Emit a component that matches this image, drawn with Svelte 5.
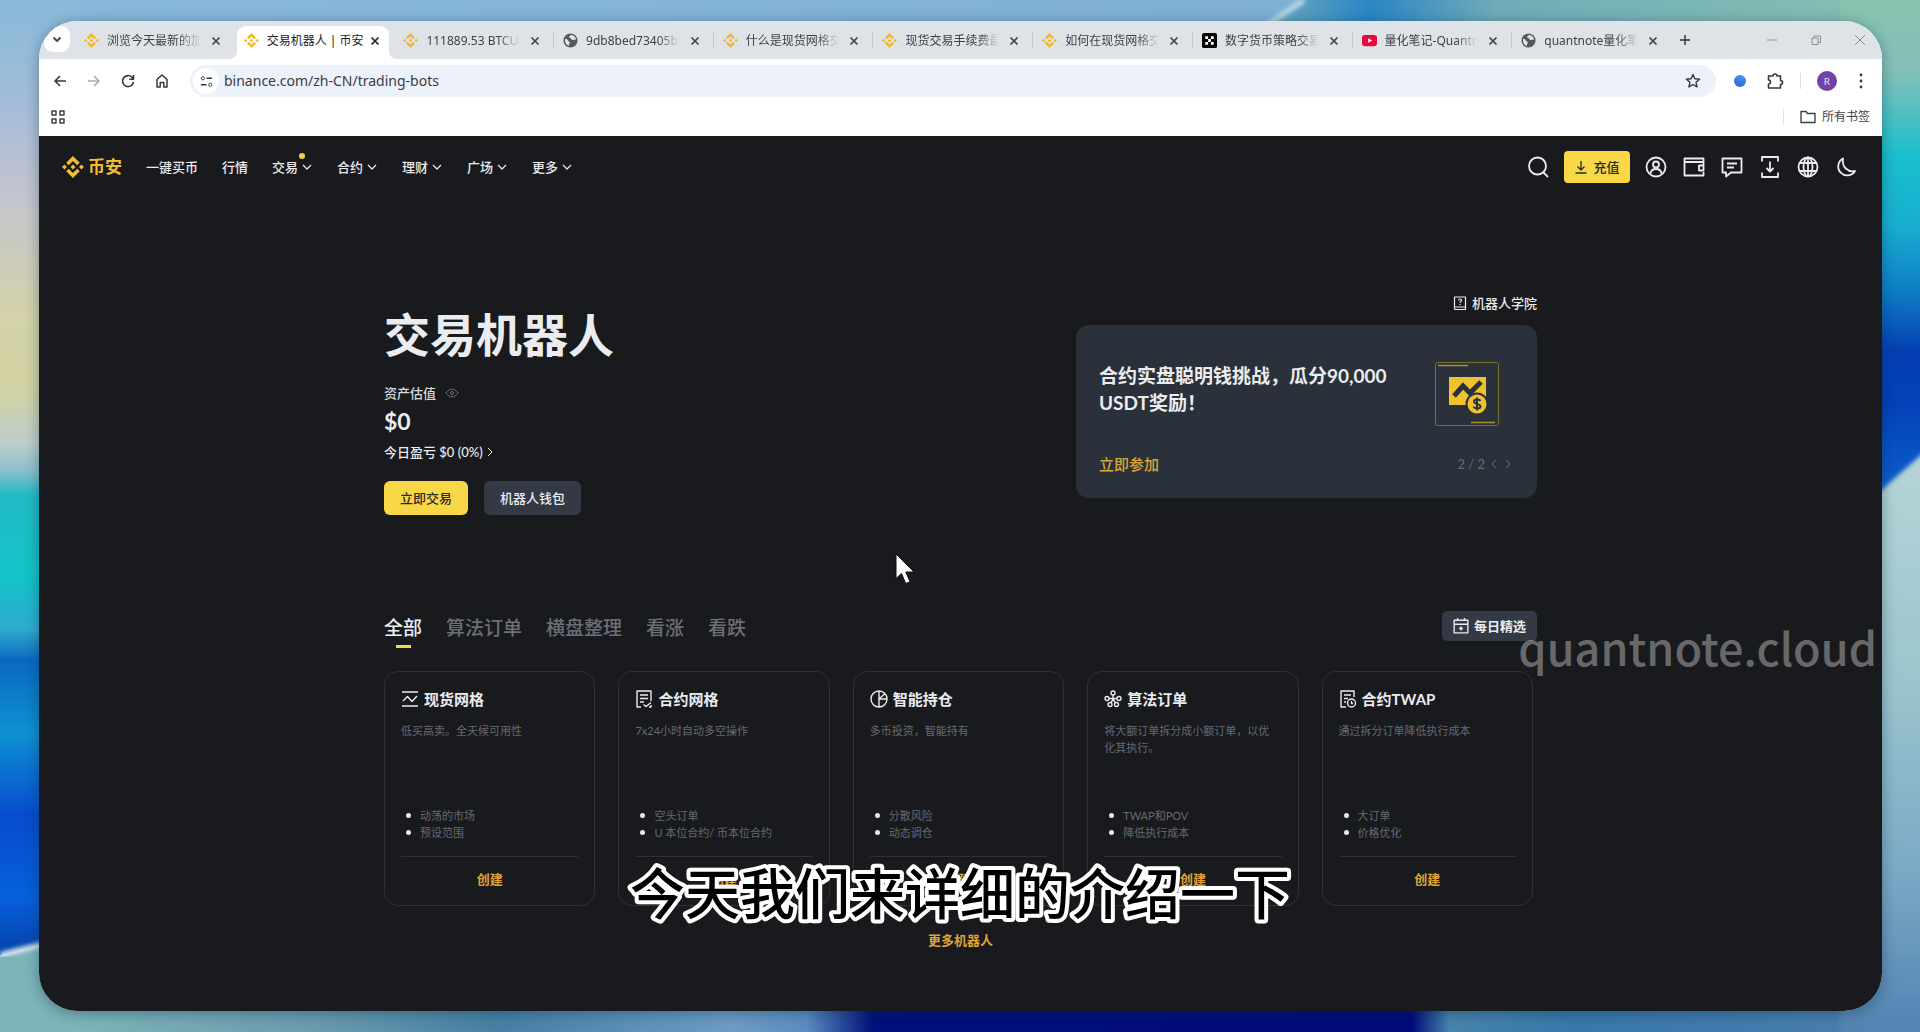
<script>
  const tabs = [
    { title: '浏览今天最新的加密货币', icon: 'bnb' },
    { title: '交易机器人 | 币安', icon: 'bnb', active: true },
    { title: '111889.53 BTCUSDT', icon: 'bnb' },
    { title: '9db8bed73405b2', icon: 'globe' },
    { title: '什么是现货网格交易', icon: 'bnb' },
    { title: '现货交易手续费最新', icon: 'bnb' },
    { title: '如何在现货网格交易', icon: 'bnb' },
    { title: '数字货币策略交易所', icon: 'okx' },
    { title: '量化笔记-Quantnote', icon: 'tube' },
    { title: 'quantnote量化笔记', icon: 'globe' }
  ];

  const nav = [
    { label: '一键买币' },
    { label: '行情' },
    { label: '交易', menu: true, dot: true },
    { label: '合约', menu: true },
    { label: '理财', menu: true },
    { label: '广场', menu: true },
    { label: '更多', menu: true }
  ];

  const tools = [
    { name: '账户', icon: 'user' },
    { name: '钱包', icon: 'wallet' },
    { name: '消息', icon: 'chat' },
    { name: '下载', icon: 'download' },
    { name: '语言', icon: 'world' },
    { name: '主题', icon: 'moon' }
  ];

  const filters = ['全部', '算法订单', '横盘整理', '看涨', '看跌'];

  const bots = [
    { icon: 'spot', title: '现货网格', text: '低买高卖。全天候可用性', points: ['动荡的市场', '预设范围'] },
    { icon: 'futures', title: '合约网格', text: '7x24小时自动多空操作', points: ['空头订单', 'U 本位合约/ 币本位合约'] },
    { icon: 'pie', title: '智能持仓', text: '多币投资，智能持有', points: ['分散风险', '动态调仓'] },
    { icon: 'algo', title: '算法订单', text: '将大额订单拆分成小额订单，以优化其执行。', points: ['TWAP和POV', '降低执行成本'] },
    { icon: 'twap', title: '合约TWAP', text: '通过拆分订单降低执行成本', points: ['大订单', '价格优化'] }
  ];
</script>

{#snippet bnb()}
  <svg viewBox="0 0 127 127" fill="currentColor" aria-hidden="true">
    <path d="M38.7 53.2 63.3 28.6l24.6 24.6 14.3-14.3L63.3 0 24.4 38.9zM0 63.3 14.3 49l14.3 14.3-14.3 14.3zM38.7 73.4 63.3 98l24.6-24.6 14.3 14.3-38.9 38.9-38.9-38.9zM98 63.3 112.3 49l14.3 14.3-14.3 14.3zM77.8 63.3 63.3 48.8 48.8 63.3l14.5 14.5z" />
  </svg>
{/snippet}

{#snippet favicon(kind)}
  {#if kind === 'bnb'}
    {@render bnb()}
  {:else if kind === 'globe'}
    <svg viewBox="0 0 16 16" aria-hidden="true">
      <circle cx="8" cy="8" r="7.5" fill="#55585d" />
      <path d="M2.2 6.2c1.8.1 2.9.9 3.3 2 .3.9 1.6.7 1.7 1.8.1 1.3-1 1.3-.8 3.7C3.6 13 1.7 10 2.2 6.200zM8.200 2.100c-.4 1.300-1.800 1.100-1.700 2.300.1 1.200 2.300.6 2.500 2 .2 1.500 1.800 1.100 2.600.7 1-.5 1.800 0 2.300.4-.1-2.900-2.200-5.500-5.700-5.400z" fill="#e2e4e9" />
    </svg>
  {:else if kind === 'okx'}
    <svg viewBox="0 0 16 16" aria-hidden="true">
      <rect width="16" height="16" rx="2" fill="#050505" />
      <path d="M3.500 3.500h3v3h-3zM9.500 3.500h3v3h-3zM6.500 6.500h3v3h-3zM3.500 9.500h3v3h-3zM9.500 9.500h3v3h-3z" fill="#fff" />
    </svg>
  {:else}
    <svg viewBox="0 0 16 16" aria-hidden="true">
      <rect y="2" width="16" height="12" rx="3" fill="#e5093f" />
      <path d="m6.500 5.500 4.500 2.500-4.500 2.500z" fill="#fff" />
    </svg>
  {/if}
{/snippet}

{#snippet cross()}
  <svg viewBox="0 0 10 10" class="line" aria-hidden="true"><path d="m1.500 1.500 7 7m0-7-7 7" stroke-width="1.700" /></svg>
{/snippet}

{#snippet tool(kind)}
  <svg viewBox="0 0 24 24" class="line" aria-hidden="true">
    {#if kind === 'user'}
      <circle cx="12" cy="12" r="9.500" /><circle cx="12" cy="9.500" r="3" />
      <path d="M6.500 18.500c.5-3.200 2.700-4.500 5.500-4.500s5 1.300 5.500 4.500" />
    {:else if kind === 'wallet'}
      <path d="M21.500 7V3.500h-19v17h19V17M2.500 7h19v3.500M21.500 10.500H17v5h4.500z" />
    {:else if kind === 'chat'}
      <path d="M2.500 3.500h19v14H11L6 21.500v-4H2.500zM7 8.500h10M7 12.500h7" />
    {:else if kind === 'download'}
      <path d="M4 6.500V2h16v4.500M4 17.500V22h16v-4.500M12 6.500v10M8.500 13l3.500 3.500 3.500-3.500" />
    {:else if kind === 'world'}
      <circle cx="12" cy="12" r="9.500" /><ellipse cx="12" cy="12" rx="4.500" ry="9.500" />
      <path d="M3.500 8h17M3.500 16h17M12 2.500v19" />
    {:else}
      <path d="M9 3.500a9 9 0 1 0 12 12.500C14 17.500 7.500 12 9 3.500z" />
    {/if}
  </svg>
{/snippet}

{#snippet botIcon(kind)}
  <svg viewBox="0 0 18 18" class="line" aria-hidden="true">
    {#if kind === 'spot'}
      <path d="M1 2h16M1 16h16M2 11l4.500-4.500 4.500 5L16 6" />
    {:else if kind === 'futures'}
      <path d="M16 11V1H2v16h4M5 5h8M5 8.500h8M5 12h4M8.500 14.500l2.500 2 5-4M14 17h2v-2" />
    {:else if kind === 'pie'}
      <circle cx="9" cy="9" r="8" /><path d="M9 1v16M9 9l6-5.500M9 9h8" />
    {:else if kind === 'algo'}
      <circle cx="9" cy="3" r="2" /><circle cx="3" cy="8.500" r="2" /><circle cx="15" cy="8.500" r="2" />
      <circle cx="6" cy="14.500" r="2" /><circle cx="12.500" cy="14.500" r="2" />
      <path d="M9 5v4M5 8.500h8M7 12.800 9 9l2.500 3.800" />
    {:else}
      <path d="M15 7V1H2v16h5M5 5h7M5 8.500h4M5 12h2" /><circle cx="12.500" cy="13" r="4" /><path d="M12.500 11v2.500H14" />
    {/if}
  </svg>
{/snippet}

<div class="desktop">
  <svg class="wallpaper" viewBox="0 0 1920 1032" preserveAspectRatio="none" aria-hidden="true">
    <defs>
      <linearGradient id="wl" x1="0" y1="0" x2="0" y2="1">
        <stop offset="0" stop-color="#88b9da" /><stop offset=".1" stop-color="#a4bcd8" />
        <stop offset=".2" stop-color="#c6c6cc" /><stop offset=".31" stop-color="#d3d2a8" />
        <stop offset=".38" stop-color="#d2d2a4" /><stop offset=".43" stop-color="#bccdcb" />
        <stop offset=".455" stop-color="#8fc0cb" /><stop offset=".48" stop-color="#22bac6" />
        <stop offset=".56" stop-color="#12c4c8" /><stop offset=".61" stop-color="#30aace" />
        <stop offset=".64" stop-color="#0a68c0" /><stop offset=".71" stop-color="#0e92d2" />
        <stop offset=".79" stop-color="#064cce" /><stop offset=".87" stop-color="#0660dc" />
        <stop offset=".93" stop-color="#0640a4" />
      </linearGradient>
      <linearGradient id="wr" x1="0" y1="0" x2="0" y2="1">
        <stop offset="0" stop-color="#86c4b0" /><stop offset=".07" stop-color="#84bfba" />
        <stop offset=".1" stop-color="#5cc0c0" /><stop offset=".15" stop-color="#1abfcc" />
        <stop offset=".22" stop-color="#18add0" /><stop offset=".28" stop-color="#107fc6" />
        <stop offset=".34" stop-color="#0440b2" /><stop offset=".39" stop-color="#0440b8" />
        <stop offset=".48" stop-color="#0c62cc" />
      </linearGradient>
      <linearGradient id="wr2" x1="0" y1="0" x2="0" y2="1">
        <stop offset="0" stop-color="#b8d4d8" /><stop offset=".4" stop-color="#9ac4cc" />
        <stop offset=".7" stop-color="#7caac6" /><stop offset="1" stop-color="#4c7fb0" />
      </linearGradient>
      <linearGradient id="wt"><stop offset="0" stop-color="#88b9da" /><stop offset="1" stop-color="#7aacd0" /></linearGradient>
      <linearGradient id="wt2">
        <stop offset="0" stop-color="#7cb0b4" /><stop offset=".12" stop-color="#5a9fc0" />
        <stop offset=".22" stop-color="#2a86c4" /><stop offset=".4" stop-color="#70acb8" />
        <stop offset="1" stop-color="#86c2b2" />
      </linearGradient>
      <linearGradient id="wb">
        <stop offset="0" stop-color="#7cb4b8" /><stop offset=".04" stop-color="#7cb4b8" />
        <stop offset=".16" stop-color="#6a9cae" />
        <stop offset=".26" stop-color="#4680a4" /><stop offset=".38" stop-color="#6c9cc4" />
        <stop offset=".42" stop-color="#5c8cc0" /><stop offset=".455" stop-color="#00107c" />
        <stop offset=".735" stop-color="#000a78" /><stop offset=".755" stop-color="#4684ac" />
        <stop offset=".82" stop-color="#3878aa" /><stop offset="1" stop-color="#4c7fb0" />
      </linearGradient>
      <filter id="soft"><feGaussianBlur stdDeviation="2" /></filter>
    </defs>
    <rect width="1920" height="60" fill="url(#wt)" />
    <path d="M1300 0H1920V60H1215z" fill="url(#wt2)" />
    <path d="M1304 0 1240 44" stroke="#c4e0ea" stroke-width="5" filter="url(#soft)" />
    <rect width="80" height="1032" fill="url(#wl)" />
    <rect x="1840" width="80" height="1032" fill="url(#wr)" />
    <rect y="1000" width="1920" height="32" fill="url(#wb)" />
    <path d="M1840 527 1930 447V1050h-90z" fill="url(#wr2)" filter="url(#soft)" />
    <path d="M0 955 80 935V1032H0z" fill="#7cb4b8" />
    <path d="M0 955 80 935" stroke="#e2eef4" stroke-width="5" filter="url(#soft)" />
  </svg>

  <div class="window">
    <div class="tabstrip">
      <button class="tabsearch" aria-label="搜索标签页">
        <svg viewBox="0 0 10 10" class="line" aria-hidden="true"><path d="m1.500 3.500 3.500 3.500 3.500-3.500" stroke-width="1.800" /></svg>
      </button>
      <div class="tablist">
        {#each tabs as tab}
          <div class="tab" class:active={tab.active}>
            <span class="favicon">{@render favicon(tab.icon)}</span>
            <button class="tabname">{tab.title}</button>
            <button class="close" aria-label="关闭">{@render cross()}</button>
          </div>
        {/each}
      </div>
      <div class="controls">
        <button aria-label="新标签页" class="plus"><svg viewBox="0 0 10 10" class="line" aria-hidden="true"><path d="M5 0v10M0 5h10" stroke-width="1.400" /></svg></button>
        <button aria-label="最小化"><svg viewBox="0 0 10 10" class="line" aria-hidden="true"><path d="M0 5h10" /></svg></button>
        <button aria-label="还原"><svg viewBox="0 0 10 10" class="line" aria-hidden="true"><path d="M1 3h6v6.500H1zM3 3V1h6.500v6.500H7" /></svg></button>
        <button aria-label="关闭窗口"><svg viewBox="0 0 10 10" class="line" aria-hidden="true"><path d="m0 0 10 10M10 0 0 10" /></svg></button>
      </div>
    </div>

    <div class="toolbar">
      <button aria-label="后退"><svg viewBox="0 0 16 16" class="line" aria-hidden="true"><path d="M14 8H3M8 3 3 8l5 5" stroke-width="1.600" /></svg></button>
      <button aria-label="前进" class="off"><svg viewBox="0 0 16 16" class="line" aria-hidden="true"><path d="M2 8h11M8 3l5 5-5 5" stroke-width="1.600" /></svg></button>
      <button aria-label="刷新"><svg viewBox="0 0 16 16" class="line" aria-hidden="true"><path d="M13.500 9A5.500 5.500 0 1 1 12 4.200L13.500 6M13.500 2v4.200H9.300" stroke-width="1.600" /></svg></button>
      <button aria-label="主页"><svg viewBox="0 0 16 16" class="line" aria-hidden="true"><path d="M3 14V6.500l5-4.500 5 4.500V14H9.800V9.500H6.200V14z" stroke-width="1.500" /></svg></button>
      <div class="omnibox">
        <button class="site" aria-label="网站信息">
          <svg viewBox="0 0 14 14" class="line" aria-hidden="true"><circle cx="3" cy="3.500" r="1.700" /><path d="M7 3.500h6M1 10.500h6" stroke-width="1.500" /><circle cx="11" cy="10.500" r="1.700" /></svg>
        </button>
        <input aria-label="地址" value="binance.com/zh-CN/trading-bots" />
        <button class="star" aria-label="收藏">
          <svg viewBox="0 0 16 16" class="line" aria-hidden="true"><path d="m8 1.500 1.900 4.300 4.700.4-3.600 3.100 1.100 4.600L8 11.500l-4.100 2.400L5 9.300 1.400 6.200l4.700-.4z" stroke-width="1.400" /></svg>
        </button>
      </div>
      <div class="extras">
        <button aria-label="扩展程序"><span class="orb"></span></button>
        <button aria-label="扩展"><svg viewBox="0 0 18 18" class="line puzzle" aria-hidden="true"><path d="M2.500 4H7a2 2 0 0 1 4 0h3.500v4.500a2 2 0 0 1 0 4V16h-12v-4a2 2 0 0 0 0-4z" stroke-width="1.600" /></svg></button>
        <span class="rule"></span>
        <button class="avatar" aria-label="个人资料">R</button>
        <button class="kebab" aria-label="菜单"><svg viewBox="0 0 4 16" fill="currentColor" aria-hidden="true"><circle cx="2" cy="2" r="1.400" /><circle cx="2" cy="8" r="1.400" /><circle cx="2" cy="14" r="1.400" /></svg></button>
      </div>
    </div>

    <div class="bookmarks">
      <button aria-label="应用"><svg viewBox="0 0 14 14" class="line" aria-hidden="true"><path d="M1 1h4v4H1zM9 1h4v4H9zM1 9h4v4H1zM9 9h4v4H9z" stroke-width="1.500" /></svg></button>
      <button class="all">
        <svg viewBox="0 0 16 16" class="line" aria-hidden="true"><path d="M1 2.500h5l1.500 2H15v9H1z" stroke-width="1.400" /></svg>
        所有书签
      </button>
    </div>

    <div class="page">
      <header>
        <a class="brand" href="#home">{@render bnb()}<span>币安</span></a>
        <nav>
          {#each nav as item}
            <a href="#nav">
              {item.label}
              {#if item.menu}<svg viewBox="0 0 12 12" class="line" aria-hidden="true"><path d="m2 4 4 4 4-4" stroke-width="1.200" /></svg>{/if}
              {#if item.dot}<i class="dot"></i>{/if}
            </a>
          {/each}
        </nav>
        <div class="tools">
          <button aria-label="搜索"><svg viewBox="0 0 24 24" class="line" aria-hidden="true"><circle cx="11.500" cy="11" r="8.500" /><path d="m17.500 17.500 4.500 4.500" /></svg></button>
          <button class="deposit">
            <svg viewBox="0 0 14 14" class="line" aria-hidden="true"><path d="M7 1v9M3.500 6.500 7 10l3.500-3.500M1.500 13h11" stroke-width="1.300" /></svg>
            充值
          </button>
          {#each tools as t}
            <button aria-label={t.name}>{@render tool(t.icon)}</button>
          {/each}
        </div>
      </header>

      <main>
        <section class="hero">
          <div class="account">
            <h1>交易机器人</h1>
            <div class="label">
              资产估值
              <svg viewBox="0 0 14 10" class="line" aria-hidden="true"><path d="M1 5c3.500-5.200 8.500-5.200 12 0-3.500 5.200-8.500 5.200-12 0z" /><circle cx="7" cy="5" r="1.500" /></svg>
            </div>
            <div class="value">$0</div>
            <a class="pnl" href="#pnl">今日盈亏 $0 (0%)<svg viewBox="0 0 10 10" class="line" aria-hidden="true"><path d="m3 1 4 4-4 4" /></svg></a>
            <div class="actions">
              <button class="primary">立即交易</button>
              <button class="secondary">机器人钱包</button>
            </div>
          </div>
          <div class="side">
            <a class="academy" href="#academy">
              <svg viewBox="0 0 14 16" class="line" aria-hidden="true"><path d="M1.500 2h11v12.500H2.500a1 1 0 0 1-1-1zM1.500 12h11M5.500 5.500c0-2 3-2 3 0 0 1-1.500 1-1.500 2.200M7 9v1" stroke-width="1.200" /></svg>
              机器人学院
            </a>
            <article class="promo">
              <div class="row">
                <h2>合约实盘聪明钱挑战，瓜分90,000 USDT奖励！</h2>
                <svg class="art" viewBox="0 0 64 64" aria-hidden="true">
                  <rect x=".5" y=".5" width="63" height="63" rx="2" fill="none" stroke="#77702e" />
                  <path d="M3 3.500h30M36 60.500h24" stroke="#a8922f" stroke-width="1.500" />
                  <path d="M14 15h37v28H14z" fill="#f0c22e" />
                  <path d="m19 34 9-10 7 7L46 20" fill="none" stroke="#2b313b" stroke-width="5" />
                  <circle cx="42" cy="42" r="11.500" fill="#2b313b" /><circle cx="42" cy="42" r="9.500" fill="#f0c22e" />
                  <path d="M45.500 39c-1-2.200-6.500-2.200-6.500.4 0 3 6.500 2 6.500 5 0 2.700-6 2.600-7 .1M42 35.500v13" fill="none" stroke="#2b313b" stroke-width="2" />
                </svg>
              </div>
              <div class="row">
                <a class="join" href="#join">立即参加</a>
                <div class="pager">
                  <span>2 / 2</span>
                  <button aria-label="上一个"><svg viewBox="0 0 10 10" class="line" aria-hidden="true"><path d="M7 1 3 5l4 4" /></svg></button>
                  <button aria-label="下一个"><svg viewBox="0 0 10 10" class="line" aria-hidden="true"><path d="m3 1 4 4-4 4" /></svg></button>
                </div>
              </div>
            </article>
          </div>
        </section>

        <div class="filterbar">
          <div class="filters">
            {#each filters as f, i}<button class:on={i === 0}>{f}</button>{/each}
          </div>
          <button class="daily">
            <svg viewBox="0 0 14 14" class="line" aria-hidden="true"><path d="M1 2h12v11H1zM1 5.500h12M4 0v2M10 0v2M7 7.500v3.500M5.300 9.200h3.400" stroke-width="1.200" /></svg>
            每日精选
          </button>
        </div>

        <section class="bots">
          {#each bots as bot}
            <article class="bot">
              <h3>{@render botIcon(bot.icon)}{bot.title}</h3>
              <p>{bot.text}</p>
              <ul>
                {#each bot.points as point}<li>{point}</li>{/each}
              </ul>
              <a class="create" href="#create">创建</a>
            </article>
          {/each}
        </section>
        <a class="more" href="#more">更多机器人</a>
      </main>
    </div>
  </div>

  <div class="watermark">quantnote.cloud</div>
  <svg class="caption"><text x="50%" y="60">今天我们来详细的介绍一下</text></svg>
  <svg class="cursor" viewBox="0 0 20 32" aria-hidden="true"><path d="M1 1v24.500l5.500-5 4.200 10 4.300-1.800-4.200-9.700H19z" fill="#fff" stroke="#111" stroke-width="1" /></svg>
</div>

<style>
  :global(body) { margin: 0; }
  .desktop {
    position: relative;
    box-sizing: border-box;
    min-height: 100vh;
    display: flex;
    padding: 21px 38px 21px 39px;
    overflow: hidden;
    font-family: Lato, "Noto Sans CJK SC", sans-serif;
    background: #7aacd0;
  }
  .wallpaper { position: absolute; inset: 0; width: 100%; height: 100%; }
  .line { fill: none; stroke: currentColor; stroke-linejoin: round; }
  svg { display: block; flex: none; }
  button {
    border: 0;
    padding: 0;
    background: none;
    color: inherit;
    font: inherit;
    cursor: pointer;
  }
  a { color: inherit; text-decoration: none; }
  .window {
    position: relative;
    flex: 1;
    min-width: 0;
    display: flex;
    flex-direction: column;
    overflow: hidden;
    border-radius: 38px;
    background: #fff;
    box-shadow: 0 2px 14px rgba(10, 40, 60, 0.4);
  }

  .tabstrip {
    display: flex;
    align-items: stretch;
    height: 38px;
    background: #dfe3e8;
    font-family: "Noto Sans", "Noto Sans CJK SC", sans-serif;
    font-size: 12px;
    color: #3f4247;
  }
  .tabsearch {
    display: grid;
    place-items: center;
    width: 26px;
    height: 26px;
    margin: 5px 4px 0 5px;
    border-radius: 9px;
    background: #fff;
  }
  .tabsearch svg { width: 10px; }
  .tablist { flex: 1; min-width: 0; display: grid; grid-template-columns: repeat(10, minmax(0, 1fr)); padding-top: 5px; }
  .tab { display: flex; align-items: center; padding: 0 13px 4px 10px; position: relative; }
  .tab + .tab:not(.active)::before {
    content: "";
    position: absolute;
    left: 0;
    top: 6px;
    width: 1px;
    height: 16px;
    background: #c0c8d0;
  }
  .tab.active + .tab::before { display: none; }
  .tab.active { margin-right: 4px; margin-left: 3px; padding: 0 9px 4px 7px; border-radius: 9px 9px 0 0; background: #fff; color: #222; }
  .tab.active::after, .tab.active::before {
    content: "";
    position: absolute;
    bottom: 0;
    width: 8px;
    height: 8px;
  }
  .tab.active::before { left: -8px; background: radial-gradient(circle at 0 0, transparent 8px, #fff 8px); }
  .tab.active::after { right: -8px; background: radial-gradient(circle at 100% 0, transparent 8px, #fff 8px); }
  .favicon { color: #efb92c; }
  .favicon svg { width: 15px; height: 15px; }
  .tabname {
    flex: 1;
    min-width: 0;
    margin: 0 10px 0 8px;
    overflow: hidden;
    white-space: nowrap;
    text-align: left;
    line-height: 18px;
    mask-image: linear-gradient(90deg, #000 76%, transparent);
  }
  .active .tabname { margin-right: 4px; mask-image: none; }
  .close svg { width: 10px; height: 10px; }
  .controls {
    flex: none;
    width: 211px;
    box-sizing: border-box;
    display: flex;
    align-items: center;
    gap: 34px;
    padding: 0 17px 0 9px;
    color: #8c9095;
  }
  .controls svg { width: 10px; height: 10px; }
  .controls .plus { margin-right: auto; color: #303236; }

  .toolbar {
    display: flex;
    align-items: center;
    gap: 18px;
    height: 44px;
    padding: 0 19px 0 13px;
    color: #34373b;
    background: #fff;
  }
  .toolbar > button svg { width: 16px; height: 16px; }
  .off { color: #a9abae; }
  .omnibox {
    flex: 1;
    display: flex;
    align-items: center;
    height: 32px;
    margin-left: 2px;
    padding: 0 15px 0 3px;
    border-radius: 16px;
    background: #edf1fa;
  }
  .site { display: grid; place-items: center; width: 26px; height: 26px; border-radius: 13px; background: #fff; }
  .site svg { width: 13px; }
  .star svg { width: 16px; }
  input {
    flex: 1;
    min-width: 0;
    border: 0;
    outline: 0;
    padding: 0 0 0 5px;
    background: none;
    color: #3a3d42;
    font: 14px/20px "Noto Sans", "Noto Sans CJK SC", sans-serif;
  }
  .extras { display: flex; align-items: center; gap: 16px; }
  .orb { display: block; width: 12px; height: 12px; margin-right: 4px; border-radius: 6px; background: linear-gradient(200deg, #3f9bf2, #3563dc); }
  .puzzle { width: 18px; }
  .rule { width: 1px; height: 16px; background: #dcdfe4; }
  .avatar { width: 20px; height: 20px; border-radius: 10px; background: #6f43a8; color: #eadff5; font-size: 10px; }
  .kebab { padding-left: 6px; }
  .kebab svg { width: 4px; height: 16px; }

  .bookmarks {
    display: flex;
    align-items: center;
    justify-content: space-between;
    height: 28px;
    padding: 0 12px 5px 12px;
    color: #3f4247;
    background: #fff;
  }
  .bookmarks svg { width: 14px; }
  .bookmarks .all { display: flex; align-items: center; gap: 6px; padding-left: 16px; border-left: 1px solid #dfe1e4; font-size: 12px; line-height: 16px; }
  .all svg { width: 16px; }

  .page {
    flex: 1;
    background: #191a1e;
    color: #eaecef;
    font-size: 13px;
    line-height: 20px;
  }
  header { display: flex; align-items: center; height: 62px; padding: 0 24px 0 23px; }
  .brand { display: flex; align-items: center; gap: 4px; color: #f3bd32; font-size: 17px; font-weight: 700; }
  .brand svg { width: 22px; height: 22px; }
  nav { display: flex; gap: 24px; margin-left: 24px; font-weight: 500; }
  nav a { position: relative; display: flex; align-items: center; gap: 3px; font-family: "Noto Sans CJK SC", sans-serif; }
  nav svg { width: 12px; }
  .dot { position: absolute; left: 27px; top: -4px; width: 6px; height: 6px; border-radius: 3px; background: #f6cf47; }
  .tools { display: flex; align-items: center; gap: 14px; margin-left: auto; }
  .tools svg { width: 24px; height: 24px; stroke-width: 1.8; }
  .tools .deposit {
    display: flex;
    align-items: center;
    justify-content: center;
    gap: 5px;
    width: 66px;
    height: 32px;
    border-radius: 4px;
    background: #f8d846;
    color: #2a2a24;
    font-family: "Noto Sans CJK SC", sans-serif;
    font-weight: 500;
  }
  .tools .deposit svg { width: 14px; height: 14px; }

  main { box-sizing: border-box; max-width: 1153px; margin: 0 auto; padding-top: 95px; display: flex; flex-direction: column; }
  .hero { display: flex; justify-content: space-between; align-items: flex-start; }
  .account { padding-top: 14px; }
  h1 { margin: 0; font-size: 46px; line-height: 56px; font-weight: 700; }
  .label { display: flex; align-items: center; gap: 9px; margin-top: 20px; font-weight: 500; color: #d6d8dc; }
  .label svg { width: 14px; color: #6a6e76; }
  .value { margin-top: 4px; font-size: 23px; line-height: 28px; font-weight: 700; }
  .pnl { display: flex; align-items: center; gap: 2px; margin-top: 7px; font-weight: 500; }
  .pnl svg { width: 10px; }
  .actions { display: flex; gap: 16px; margin-top: 19px; }
  .actions button, .daily { height: 34px; padding: 0 16px; border-radius: 6px; font-weight: 500; }
  .primary { background: #f8d846; color: #2a2a24; }
  .actions .secondary, .daily { background: #333a45; }
  .side { width: 461px; }
  .academy { display: flex; align-items: center; justify-content: flex-end; gap: 5px; font-weight: 500; }
  .academy svg { width: 14px; height: 16px; }
  .promo {
    box-sizing: border-box;
    height: 173px;
    margin-top: 12px;
    padding: 37px 24px 23px 23px;
    border-radius: 13px;
    background: #2b313b;
    display: flex;
    flex-direction: column;
    justify-content: space-between;
  }
  .row { display: flex; justify-content: space-between; align-items: center; }
  h2 { flex: 0 1 300px; margin: 0; font-size: 19px; line-height: 27px; font-weight: 700; }
  .art { width: 64px; height: 64px; margin-right: 14px; }
  .promo .row:first-child { align-items: flex-start; }
  .join { font-size: 15px; line-height: 22px; font-weight: 500; color: #d9a63a; }
  .pager { display: flex; align-items: center; gap: 4px; color: #666d78; }
  .pager svg { width: 10px; }

  .filterbar { display: flex; align-items: center; justify-content: space-between; margin-top: 96px; height: 30px; }
  .filters { display: flex; gap: 24px; font-size: 19px; line-height: 30px; font-weight: 500; color: #6c6e78; }
  .filters button { position: relative; padding-top: 3px; }
  .filters .on { color: #eef0f3; }
  .filters .on::after { content: ""; position: absolute; left: 12px; bottom: -5px; width: 15px; height: 3px; background: #f3d54e; }
  .daily { display: flex; align-items: center; gap: 5px; height: 30px; padding: 0 11px; border-radius: 5px; font-weight: 700; }
  .daily svg { width: 16px; }

  .bots { display: grid; grid-template-columns: repeat(5, minmax(0, 1fr)); gap: 23px; margin: 30px 4px 0 0; }
  .bot {
    display: flex;
    flex-direction: column;
    padding: 15px 16px;
    border: 1px solid #2e3035;
    border-radius: 14px;
    font-size: 11px;
    line-height: 17px;
    color: #666973;
  }
  h3 { display: flex; align-items: center; gap: 5px; margin: 0; font-size: 15px; line-height: 24px; font-weight: 700; color: #eaecef; }
  h3 svg { width: 18px; height: 18px; stroke-width: 1.4; }
  .bot p { min-height: 85px; margin: 11px 6px 0 0; }
  .bot ul { margin: 0; padding: 0; list-style: none; }
  .bot li { display: flex; align-items: center; gap: 9px; padding-left: 5px; white-space: nowrap; }
  .bot li::before { content: ""; width: 5px; height: 5px; border-radius: 3px; background: #e6e8eb; }
  .create { margin-top: 15px; padding-top: 12px; padding-bottom: 1px; border-top: 1px solid #2e3035; text-align: center; font-size: 13px; line-height: 20px; font-weight: 700; color: #dfa236; }
  .more { margin: 24px auto 0; font-weight: 700; color: #dfa236; }

  .watermark {
    position: absolute;
    right: 43px;
    top: 611px;
    font: 500 45px/72px "Noto Sans CJK SC", sans-serif;
    color: rgba(255, 255, 255, 0.36);
  }
  .caption { position: absolute; left: 0; top: 854px; width: 100%; height: 80px; }
  .caption text {
    font: 500 55px "Noto Sans CJK SC", sans-serif;
    text-anchor: middle;
    fill: #000;
    stroke: #fff;
    stroke-width: 8px;
    stroke-linejoin: round;
    paint-order: stroke fill;
  }
  .cursor { position: absolute; left: 895px; top: 553px; width: 20px; height: 32px; }
</style>
